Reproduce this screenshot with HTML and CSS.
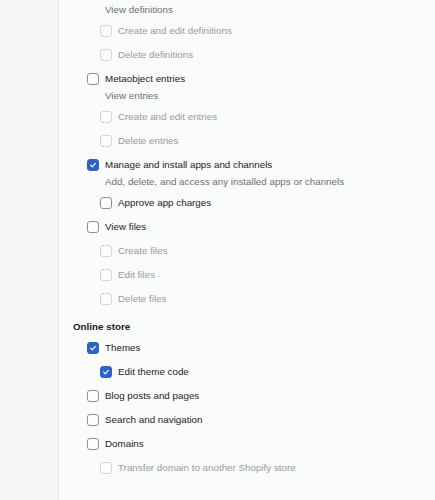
FILE: index.html
```html
<!DOCTYPE html>
<html>
<head>
<meta charset="utf-8">
<link rel="stylesheet" href="styles.css">
</head>
<body>
<div class="page">
  <div class="rail"></div>
  <div class="main">
    <div class="group l1">
      <div class="desc">View definitions</div>
      <div class="group l2">
        <div class="row disabled"><span class="box"></span><span class="label">Create and edit definitions</span></div>
        <div class="row disabled"><span class="box"></span><span class="label">Delete definitions</span></div>
      </div>
    </div>
    <div class="group l1">
      <div class="row"><span class="box"></span><span class="label">Metaobject entries</span></div>
      <div class="desc">View entries</div>
      <div class="group l2">
        <div class="row disabled"><span class="box"></span><span class="label">Create and edit entries</span></div>
        <div class="row disabled"><span class="box"></span><span class="label">Delete entries</span></div>
      </div>
      <div class="row"><span class="box checked"><svg viewBox="0 0 12 12"><polyline points="3.2,6.2 5.2,8.2 8.8,4"/></svg></span><span class="label">Manage and install apps and channels</span></div>
      <div class="desc">Add, delete, and access any installed apps or channels</div>
      <div class="group l2">
        <div class="row"><span class="box"></span><span class="label">Approve app charges</span></div>
      </div>
      <div class="row"><span class="box"></span><span class="label">View files</span></div>
      <div class="group l2">
        <div class="row disabled"><span class="box"></span><span class="label">Create files</span></div>
        <div class="row disabled"><span class="box"></span><span class="label">Edit files</span></div>
        <div class="row disabled"><span class="box"></span><span class="label">Delete files</span></div>
      </div>
    </div>
    <div class="heading">Online store</div>
    <div class="group l1">
      <div class="row"><span class="box checked"><svg viewBox="0 0 12 12"><polyline points="3.2,6.2 5.2,8.2 8.8,4"/></svg></span><span class="label">Themes</span></div>
      <div class="group l2">
        <div class="row"><span class="box checked"><svg viewBox="0 0 12 12"><polyline points="3.2,6.2 5.2,8.2 8.8,4"/></svg></span><span class="label">Edit theme code</span></div>
      </div>
      <div class="row"><span class="box"></span><span class="label">Blog posts and pages</span></div>
      <div class="row"><span class="box"></span><span class="label">Search and navigation</span></div>
      <div class="row"><span class="box"></span><span class="label">Domains</span></div>
      <div class="group l2">
        <div class="row disabled"><span class="box"></span><span class="label">Transfer domain to another Shopify store</span></div>
      </div>
    </div>
  </div>
</div>
</body>
</html>
```
FILE: styles.css
```css
html, body {
  margin: 0;
  padding: 0;
}
body {
  font-family: "Liberation Sans", Arial, sans-serif;
  font-size: 9.8px;
  color: #1f2123;
  background: #fafbfb;
}
.page {
  display: flex;
  height: 500px;
  overflow: hidden;
}
.rail {
  width: 58px;
  flex: none;
  background: #f5f5f6;
  border-right: 1px solid #e6e7e9;
}
.main {
  flex: 1;
  padding: 5px 0 0 14px;
  background: #fafbfb;
}
.group {
  display: flex;
  flex-direction: column;
}
.l1 {
  padding-left: 14px;
}
.l2 {
  padding-left: 13px;
}
.row {
  display: flex;
  align-items: center;
  gap: 6px;
  height: 24px;
}
.box {
  width: 10px;
  height: 10px;
  flex: none;
  border: 1px solid #8c9196;
  border-radius: 3px;
  background: #ffffff;
  display: flex;
  align-items: center;
  justify-content: center;
}
.box svg {
  width: 12px;
  height: 12px;
  fill: none;
  stroke: #ffffff;
  stroke-width: 1.4;
  stroke-linecap: round;
  stroke-linejoin: round;
}
.box.checked {
  background: #2f62c9;
  border-color: #2f62c9;
}
.disabled .box {
  border-color: #d4d6d9;
  background: #fcfcfc;
}
.disabled .label {
  color: #989ca0;
}
.label {
  line-height: 14px;
}
.desc {
  color: #6d7175;
  line-height: 14px;
  margin: -2px 0 2px 18px;
}
.heading {
  font-weight: 700;
  line-height: 16px;
  margin: 8px 0 1px 0;
}
```
